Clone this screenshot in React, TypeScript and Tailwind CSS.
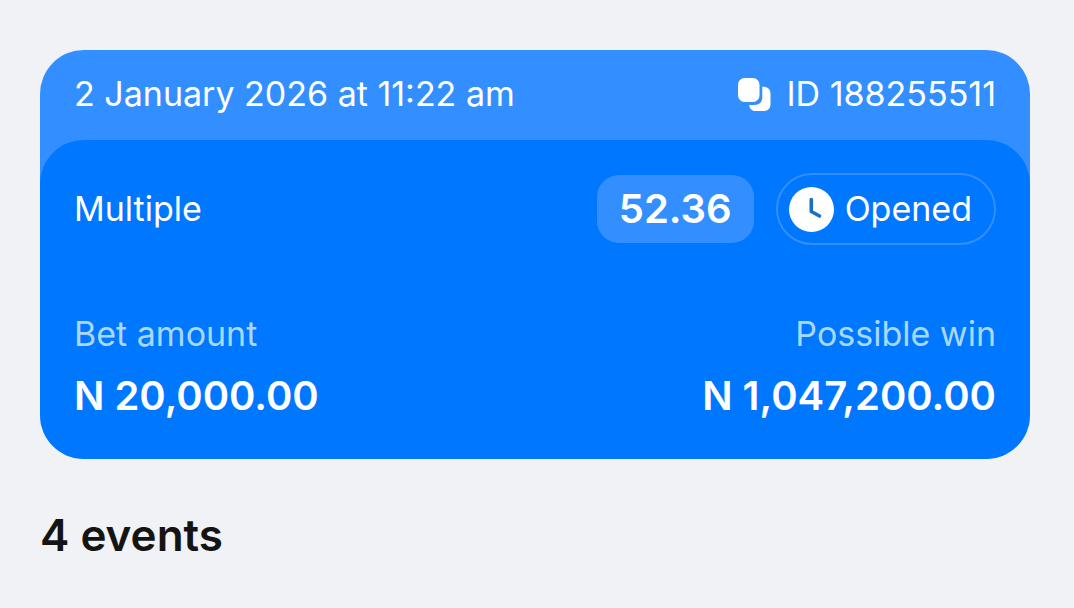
import type { ReactNode } from 'react'

interface BetSlip {
  placedAt: string
  id: string
  type: string
  odds: string
  status: string
  amount: string
  possibleWin: string
  events: number
}

const SLIP: BetSlip = {
  placedAt: '2 January 2026 at 11:22 am',
  id: '188255511',
  type: 'Multiple',
  odds: '52.36',
  status: 'Opened',
  amount: 'N 20,000.00',
  possibleWin: 'N 1,047,200.00',
  events: 4,
}

function CopyIcon() {
  return (
    <svg className="size-9 shrink-0" viewBox="0 0 36 36" fill="currentColor" aria-hidden="true">
      <rect x="2" y="2" width="21.500" height="24" rx="6.500" />
      <path d="M26.300 10.800H27C31.500 10.800 34.500 13.300 34.500 17.500V28C34.500 32.500 32 35 27.500 35H20C16 35 13.700 33 13.200 29H18C23.500 29 26.300 26 26.300 21Z" />
    </svg>
  )
}

function ClockIcon() {
  return (
    <svg className="size-[46px] shrink-0" viewBox="0 0 46 46" fill="none" aria-hidden="true">
      <circle cx="23.500" cy="23.500" r="22.500" fill="#fff" />
      <path d="M23.300 13.500V25.500L31.500 30" stroke="#1a6fc4" strokeWidth="3.600" strokeLinecap="round" strokeLinejoin="round" />
    </svg>
  )
}

// Label over value
function Sum({ label, children, className = '' }: { label: string; children: ReactNode; className?: string }) {
  return (
    <div className={className}>
      <dt className="text-[34px] leading-[48px] text-[#a9d8fc]">{label}</dt>
      <dd className="mt-3 text-[40px] leading-[52px] font-semibold">{children}</dd>
    </div>
  )
}

export default function App() {
  return (
    <main className="min-h-screen bg-[#f0f2f5] pt-[50px] pr-11 pl-10 font-['Inter',sans-serif] text-[#141414]">
      <section className="rounded-[44px] bg-[#338fff] text-white">
        <header className="flex items-center justify-between px-[34px] pt-5 pb-[22px] text-[34px] leading-[48px]">
          <time>{SLIP.placedAt}</time>
          <button type="button" className="flex items-center gap-[14px]">
            <CopyIcon />
            ID {SLIP.id}
          </button>
        </header>

        <div className="rounded-[44px] bg-[#0077ff] px-[34px] pt-[33px] pb-[37px]">
          <div className="flex items-center justify-between">
            <span className="text-[34px] leading-[48px]">{SLIP.type}</span>
            <div className="flex items-center gap-[22px]">
              <span className="rounded-[22px] bg-[#338fff] px-[22px] py-2 text-[40px] leading-[52px] font-semibold">
                {SLIP.odds}
              </span>
              <span className="flex items-center gap-[11px] rounded-full border-2 border-[#338fff] py-[10px] pr-[22px] pl-[10px] text-[34px] leading-[48px]">
                <ClockIcon />
                {SLIP.status}
              </span>
            </div>
          </div>

          <dl className="mt-[65px] flex items-center justify-between">
            <Sum label="Bet amount">{SLIP.amount}</Sum>
            <Sum label="Possible win" className="text-right">{SLIP.possibleWin}</Sum>
          </dl>
        </div>
      </section>

      <h1 className="pt-12 text-[44px] leading-[56px] font-semibold">{SLIP.events} events</h1>
    </main>
  )
}
